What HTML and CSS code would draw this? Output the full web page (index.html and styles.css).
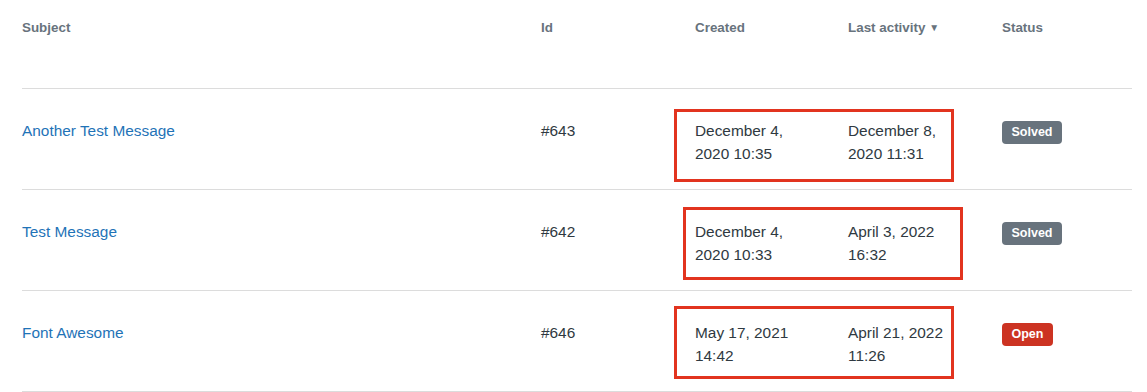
FILE: index.html
```html
<!DOCTYPE html>
<html>
<head>
<meta charset="utf-8">
<link rel="stylesheet" href="styles.css">
</head>
<body>
<div class="wrap">
<table class="requests">
  <thead>
    <tr>
      <th class="c-subject">Subject</th>
      <th class="c-id">Id</th>
      <th class="c-created">Created</th>
      <th class="c-last">Last activity <span class="arrow">▼</span></th>
      <th class="c-status">Status</th>
    </tr>
  </thead>
  <tbody>
    <tr>
      <td><a href="#">Another Test Message</a></td>
      <td>#643</td>
      <td class="date mark-cell"><span class="mark m1"></span>December 4, 2020 10:35</td>
      <td class="date">December 8, 2020 11:31</td>
      <td><span class="badge solved">Solved</span></td>
    </tr>
    <tr>
      <td><a href="#">Test Message</a></td>
      <td>#642</td>
      <td class="date mark-cell"><span class="mark m2"></span>December 4, 2020 10:33</td>
      <td class="date">April 3, 2022 16:32</td>
      <td><span class="badge solved">Solved</span></td>
    </tr>
    <tr>
      <td><a href="#">Font Awesome</a></td>
      <td>#646</td>
      <td class="date mark-cell"><span class="mark m3"></span>May 17, 2021 14:42</td>
      <td class="date">April 21, 2022 11:26</td>
      <td><span class="badge open">Open</span></td>
    </tr>
  </tbody>
</table>
</div>
</body>
</html>
```

FILE: styles.css
```css
html, body {
  margin: 0;
  padding: 0;
  background: #fff;
}
body {
  font-family: "Liberation Sans", Arial, sans-serif;
  color: #2f3941;
}
.wrap {
  padding: 0 15px 0 22px;
}
.requests {
  width: 1110px;
  border-collapse: collapse;
  table-layout: fixed;
}
.requests th {
  text-align: left;
  font-size: 13.4px;
  font-weight: bold;
  color: #68737d;
  height: 88px;
  padding: 20px 0 0 0;
  vertical-align: top;
  line-height: 16px;
  border-bottom: 1px solid #dcdcdc;
  box-sizing: border-box;
}
.c-subject { width: 519px; }
.c-id { width: 154px; }
.c-created { width: 153px; }
.c-last { width: 154px; }
.c-status { width: 130px; }
.arrow {
  font-size: 10px;
  position: relative;
  top: -1px;
}
.requests td {
  font-size: 15.4px;
  line-height: 23px;
  vertical-align: top;
  padding: 30px 0 0 0;
  height: 101px;
  box-sizing: border-box;
  border-bottom: 1px solid #dcdcdc;
}
.requests td.date {
  padding-right: 36px;
}
.requests a {
  color: #1f73b7;
  text-decoration: none;
}
.badge {
  display: inline-block;
  color: #fff;
  font-size: 12.5px;
  font-weight: bold;
  line-height: 23px;
  padding: 0 8px;
  border-radius: 4px;
  margin-top: 1px;
  text-align: center;
}
.badge.solved {
  width: 44px;
  background: #68737d;
}
.badge.open {
  width: 35px;
  background: #cc3322;
}
.mark-cell {
  position: relative;
}
.mark {
  position: absolute;
  width: 280px;
  height: 73px;
  border: 3px solid #e2341f;
  box-sizing: border-box;
}
.m1 { left: -21px; top: 20px; }
.m2 { left: -12px; top: 17px; }
.m3 { left: -21px; top: 15px; }
```
